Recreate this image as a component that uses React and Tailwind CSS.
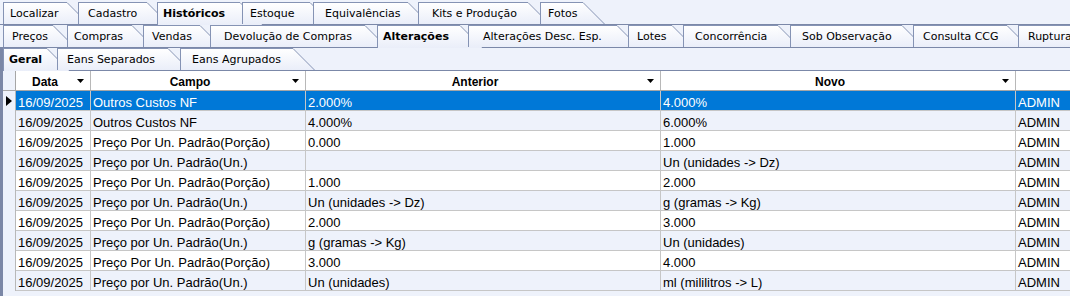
import React from 'react';

const row1 = [
  { label: 'Localizar', w: 'w-[75px]', b: 'w-[64px]', pl: 'pl-[6px]' },
  { label: 'Cadastro', w: 'w-[79px]', b: 'w-[69px]', pl: 'pl-[9px]' },
  { label: 'Históricos', w: 'w-[85px]', b: 'w-[83px]', pl: 'pl-[5px]', sel: true },
  { label: 'Estoque', w: 'w-[71px]', b: 'w-[68px]', pl: 'pl-[7px]' },
  { label: 'Equivalências', w: 'w-[105px]', b: 'w-[95px]', pl: 'pl-[11px]' },
  { label: 'Kits e Produção', w: 'w-[122px]', b: 'w-[110px]', pl: 'pl-[13px]' },
  { label: 'Fotos', w: 'w-[65px]', b: 'w-[43px]', pl: 'pl-[7px]' },
];

const row2 = [
  { label: 'Preços', w: 'w-[64px]', b: 'w-[50px]', pl: 'pl-[8px]' },
  { label: 'Compras', w: 'w-[76px]', b: 'w-[65px]', pl: 'pl-[6px]' },
  { label: 'Vendas', w: 'w-[67px]', b: 'w-[57px]', pl: 'pl-[8px]' },
  { label: 'Devolução de Compras', w: 'w-[167px]', b: 'w-[155px]', pl: 'pl-[13px]' },
  { label: 'Alterações', w: 'w-[91px]', b: 'w-[83px]', pl: 'pl-[5px]', sel: true },
  { label: 'Alterações Desc. Esp.', w: 'w-[160px]', b: 'w-[149px]', pl: 'pl-[14px]' },
  { label: 'Lotes', w: 'w-[55px]', b: 'w-[44px]', pl: 'pl-[8px]' },
  { label: 'Concorrência', w: 'w-[107px]', b: 'w-[95px]', pl: 'pl-[11px]' },
  { label: 'Sob Observação', w: 'w-[123px]', b: 'w-[112px]', pl: 'pl-[11px]' },
  { label: 'Consulta CCG', w: 'w-[105px]', b: 'w-[94px]', pl: 'pl-[9px]' },
  { label: 'Ruptura', w: 'w-[100px]', b: 'w-[80px]', pl: 'pl-[9px]' },
];

const row3 = [
  { label: 'Geral', w: 'w-[54px]', b: 'w-[44px]', pl: 'pl-[5px]', sel: true },
  { label: 'Eans Separados', w: 'w-[123px]', b: 'w-[111px]', pl: 'pl-[9px]' },
  { label: 'Eans Agrupados', w: 'w-[135px]', b: 'w-[113px]', pl: 'pl-[11px]' },
];

function Tab({ t, id }) {
  return (
    <div className={`relative flex shrink-0 ${t.w}`}>
      <div
        className={`${t.b} ${t.pl} ${t.sel ? 'h-[23px] font-bold' : 'h-[22px]'} shrink-0 flex items-start pt-[4px] border-l border-t border-[#8593b4] bg-gradient-to-b from-white to-[#eaeef9] whitespace-nowrap`}
      >
        <span className="leading-[14px]">{t.label}</span>
      </div>
      <svg width="22" height={t.sel ? 23 : 22} className="block shrink-0">
        <defs>
          <linearGradient id={id} x1="0" y1="0" x2="0" y2="22" gradientUnits="userSpaceOnUse">
            <stop offset="0" stopColor="#ffffff" />
            <stop offset="1" stopColor="#eaeef9" />
          </linearGradient>
        </defs>
        <polygon points={t.sel ? '0,0 23,23 0,23' : '0,0 22,22 0,22'} fill={`url(#${id})`} />
        <line x1="0" y1="0.5" x2="22" y2="22.5" stroke="#8593b4" strokeWidth="1" />
      </svg>
    </div>
  );
}

function TabRow({ tabs, prefix }) {
  return tabs.map((t, i) => <Tab key={i} t={t} id={`${prefix}${i}`} />);
}

const data = [
  ['16/09/2025', 'Outros Custos NF', '2.000%', '4.000%', 'ADMIN'],
  ['16/09/2025', 'Outros Custos NF', '4.000%', '6.000%', 'ADMIN'],
  ['16/09/2025', 'Preço Por Un. Padrão(Porção)', '0.000', '1.000', 'ADMIN'],
  ['16/09/2025', 'Preço por Un. Padrão(Un.)', '', 'Un (unidades -> Dz)', 'ADMIN'],
  ['16/09/2025', 'Preço Por Un. Padrão(Porção)', '1.000', '2.000', 'ADMIN'],
  ['16/09/2025', 'Preço por Un. Padrão(Un.)', 'Un (unidades -> Dz)', 'g (gramas -> Kg)', 'ADMIN'],
  ['16/09/2025', 'Preço Por Un. Padrão(Porção)', '2.000', '3.000', 'ADMIN'],
  ['16/09/2025', 'Preço por Un. Padrão(Un.)', 'g (gramas -> Kg)', 'Un (unidades)', 'ADMIN'],
  ['16/09/2025', 'Preço Por Un. Padrão(Porção)', '3.000', '4.000', 'ADMIN'],
  ['16/09/2025', 'Preço por Un. Padrão(Un.)', 'Un (unidades)', 'ml (mililitros -> L)', 'ADMIN'],
];

const colW = ['w-[75px]', 'w-[215px]', 'w-[355px]', 'w-[355px]', 'w-[100px]'];
const headers = ['Data', 'Campo', 'Anterior', 'Novo', ''];

function DropArrow() {
  return (
    <svg width="7" height="4" className="block">
      <polygon points="0,0 7,0 3.5,4" fill="#000" />
    </svg>
  );
}

export default function App() {
  return (
    <div className="w-[1070px] h-[296px] overflow-hidden bg-[#eef2fb] flex flex-col text-black font-['DejaVu_Sans',sans-serif] text-[11px]">
      {/* Row 1 tabs */}
      <div className="h-[25px] pt-[2px] pl-[3px] flex border-b border-[#7b88a8] shrink-0">
        <TabRow tabs={row1} prefix="a" />
      </div>
      {/* Row 2 tabs */}
      <div className="h-[23px] pl-[3px] flex border-b border-[#7b88a8] shrink-0">
        <TabRow tabs={row2} prefix="b" />
      </div>
      {/* Inner page */}
      <div className="flex-1 flex flex-col border-l-[3px] border-[#7b87a6]">
        <div className="h-[22px] flex shrink-0">
          <TabRow tabs={row3} prefix="c" />
        </div>
        <div className="border-t border-[#7b88a8] font-['Liberation_Sans',Arial,sans-serif]">
          {/* header */}
          <div className="flex h-[20px] border-b border-[#a6a6a6]">
            <div className="w-[13px] shrink-0 border-r border-[#a6a6a6]" />
            {headers.map((h, i) => (
              <div
                key={i}
                className={`${colW[i]} shrink-0 bg-white border-r border-[#b8b8b8] flex items-center text-[12px] font-bold`}
              >
                <div className="flex-1 text-center pt-[2px] leading-[14px]">{h}</div>
                {h && (
                  <div className="w-[16px] flex justify-end pr-[6px]">
                    <DropArrow />
                  </div>
                )}
              </div>
            ))}
          </div>
          {/* rows */}
          {data.map((r, ri) => {
            const sel = ri === 0;
            const bg = sel ? 'bg-[#0078d7] text-white' : ri % 2 === 1 ? 'bg-[#eef2fb]' : 'bg-white';
            return (
              <div key={ri} className="flex h-[20px]">
                <div className="w-[13px] shrink-0 border-r border-[#b8b8b8] flex items-center pl-[3px]">
                  {sel && (
                    <svg width="6" height="10" className="block">
                      <polygon points="0,0 6,5 0,10" fill="#000" />
                    </svg>
                  )}
                </div>
                {r.map((c, ci) => (
                  <div
                    key={ci}
                    className={`${colW[ci]} ${bg} shrink-0 border-r border-b border-[#c6c6c6] flex items-center pt-[3px] pl-[2px] text-[13px] whitespace-nowrap overflow-hidden`}
                  >
                    <span className="leading-[15px]">{c}</span>
                  </div>
                ))}
              </div>
            );
          })}
        </div>
      </div>
    </div>
  );
}
